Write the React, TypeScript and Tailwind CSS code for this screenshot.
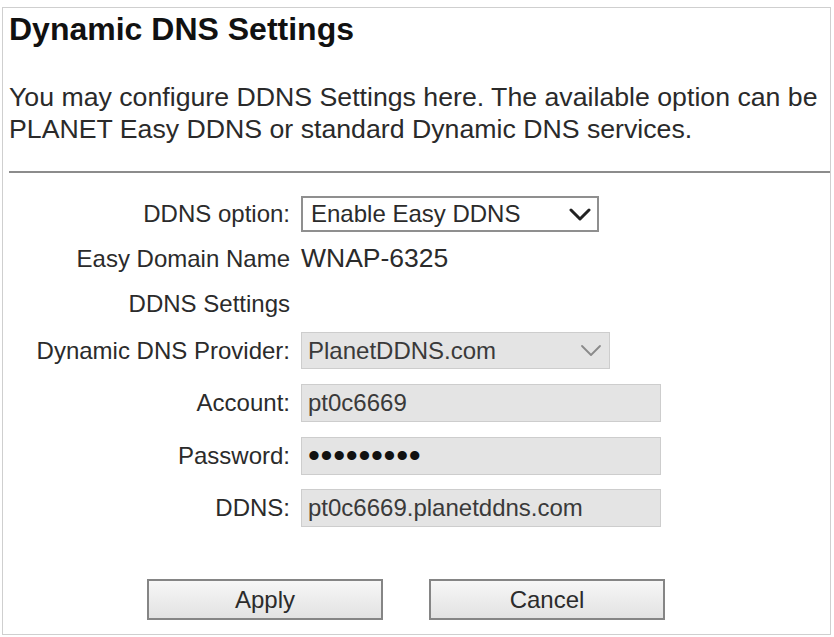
import React from "react";

function Chevron({ dark }: { dark?: boolean }) {
  return (
    <svg viewBox="0 0 22 13" className="w-[22px] h-[13px]" fill="none">
      <polyline
        points="2 2 11 11 20 2"
        stroke={dark ? "#222" : "#8a8a8a"}
        strokeWidth={dark ? 3 : 1.8}
        strokeLinecap="round"
        strokeLinejoin="round"
      />
    </svg>
  );
}

function Row({ label, children, className = "" }: { label: string; children?: React.ReactNode; className?: string }) {
  return (
    <div className={`flex items-center ${className}`}>
      <div className="w-[287px] text-right text-[24px] text-[#2b2b2b] leading-none">{label}</div>
      <div className="ml-[11px]">{children}</div>
    </div>
  );
}

function Field({ children }: { children: React.ReactNode }) {
  return (
    <div className="w-[360px] h-[38px] bg-[#e4e4e4] border border-[#cdcdcd] flex items-center pl-[6px] text-[24px] text-[#3a3a3a]">
      {children}
    </div>
  );
}

export default function App() {
  return (
    <div className="w-[834px] h-[637px] bg-white overflow-hidden pt-[7px] pl-[2px]" style={{ fontFamily: '"Liberation Sans", Arial, sans-serif' }}>
      <div className="w-[829px] h-[628px] border border-[#cfcfcf]">
        <h1 className="pl-[6px] pt-[3px] text-[32px] font-bold leading-[36px] text-[#111]">Dynamic DNS Settings</h1>
        <p className="pl-[6px] mt-[34px] text-[26.7px] leading-[32px] text-[#2a2a2a]">
          You may configure DDNS Settings here. The available option can be
          <br />
          PLANET Easy DDNS or standard Dynamic DNS services.
        </p>
        <div className="ml-[6px] mt-[26px] h-[2px] bg-[#8c8c8c]" />

        <div className="mt-[23px] flex flex-col">
          <Row label="DDNS option:">
            <div className="w-[298px] h-[36px] border-2 border-[#8f8f8f] bg-white flex items-center justify-between pl-[8px] pr-[6px] text-[24px] text-[#2b2b2b]">
              <span>Enable Easy DDNS</span>
              <Chevron dark />
            </div>
          </Row>
          <Row label="Easy Domain Name" className="mt-[9px] h-[36px]">
            <span className="text-[26.5px] text-[#2b2b2b]">WNAP-6325</span>
          </Row>
          <Row label="DDNS Settings" className="mt-[9px] h-[36px]" />
          <Row label="Dynamic DNS Provider:" className="mt-[10px]">
            <div className="w-[309px] h-[37px] bg-[#e4e4e4] border border-[#cdcdcd] flex items-center justify-between pl-[6px] pr-[7px] text-[24px] text-[#3a3a3a]">
              <span>PlanetDDNS.com</span>
              <Chevron />
            </div>
          </Row>
          <Row label="Account:" className="mt-[15px]">
            <Field>pt0c6669</Field>
          </Row>
          <Row label="Password:" className="mt-[15px]">
            <Field>
              <span className="text-[34px] leading-none tracking-[0.7px] text-[#111] -mt-[3px]">•••••••••</span>
            </Field>
          </Row>
          <Row label="DDNS:" className="mt-[14px]">
            <Field>pt0c6669.planetddns.com</Field>
          </Row>
        </div>

        <div className="mt-[52px] ml-[144px] flex gap-[46px]">
          <button className="w-[236px] h-[41px] border-2 border-[#858585] bg-gradient-to-b from-[#f7f7f7] to-[#e2e2e2] text-[24px] text-[#2b2b2b]">
            Apply
          </button>
          <button className="w-[236px] h-[41px] border-2 border-[#858585] bg-gradient-to-b from-[#f7f7f7] to-[#e2e2e2] text-[24px] text-[#2b2b2b]">
            Cancel
          </button>
        </div>
      </div>
    </div>
  );
}
